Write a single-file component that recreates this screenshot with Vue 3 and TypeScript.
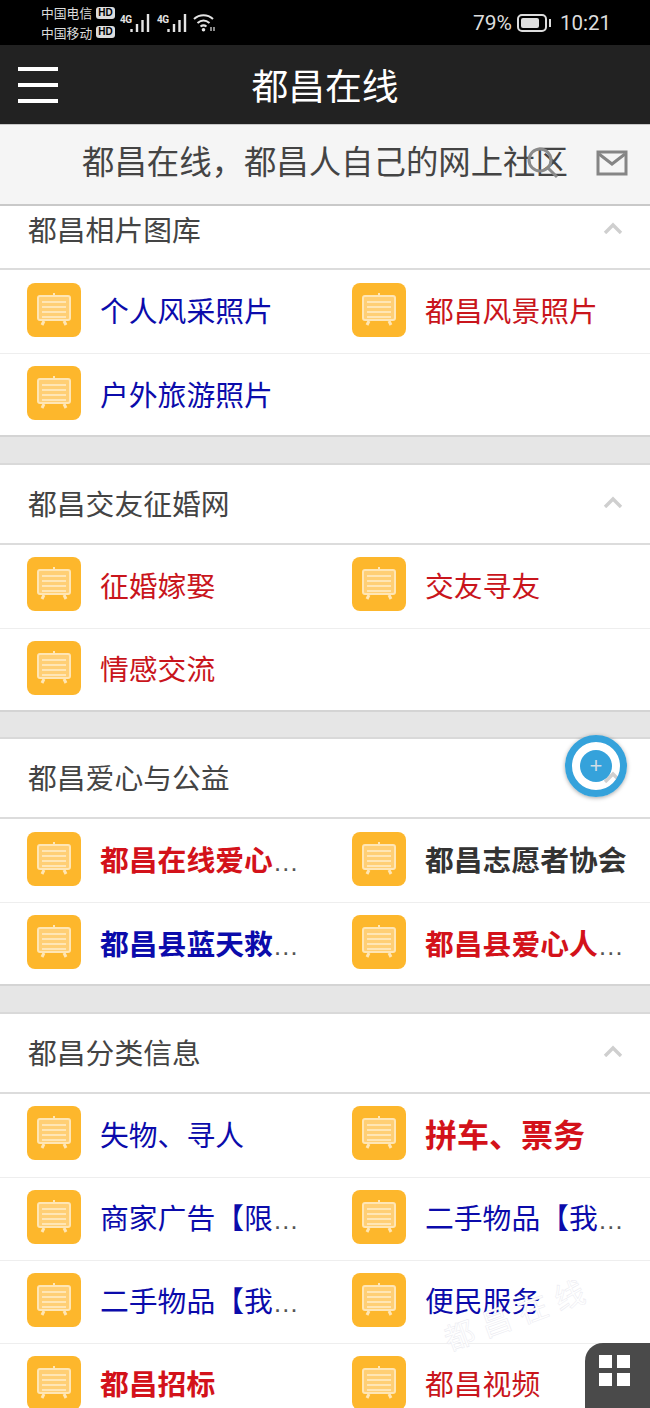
<script setup lang="ts">
type Item = { name: string; color: 'blue' | 'red' | 'dark'; bold?: boolean; big?: boolean; cut?: boolean }
type Section = { title: string; items: Item[] }

const sections: Section[] = [
  {
    title: '都昌相片图库',
    items: [
      { name: '个人风采照片', color: 'blue' },
      { name: '都昌风景照片', color: 'red' },
      { name: '户外旅游照片', color: 'blue' },
    ],
  },
  {
    title: '都昌交友征婚网',
    items: [
      { name: '征婚嫁娶', color: 'red' },
      { name: '交友寻友', color: 'red' },
      { name: '情感交流', color: 'red' },
    ],
  },
  {
    title: '都昌爱心与公益',
    items: [
      { name: '都昌在线爱心', color: 'red', bold: true, cut: true },
      { name: '都昌志愿者协会', color: 'dark', bold: true },
      { name: '都昌县蓝天救', color: 'blue', bold: true, cut: true },
      { name: '都昌县爱心人', color: 'red', bold: true, cut: true },
    ],
  },
  {
    title: '都昌分类信息',
    items: [
      { name: '失物、寻人', color: 'blue' },
      { name: '拼车、票务', color: 'red', bold: true, big: true },
      { name: '商家广告【限', color: 'blue', cut: true },
      { name: '二手物品【我', color: 'blue', cut: true },
      { name: '二手物品【我', color: 'blue', cut: true },
      { name: '便民服务', color: 'blue' },
      { name: '都昌招标', color: 'red', bold: true },
      { name: '都昌视频', color: 'red' },
    ],
  },
]

const toRows = (items: Item[]) => {
  const rows: Item[][] = []
  for (let i = 0; i < items.length; i += 2) rows.push(items.slice(i, i + 2))
  return rows
}
</script>

<template>
  <div class="page">
    <div class="status">
      <div class="carriers">
        <div class="carrier">中国电信<span class="hd">HD</span></div>
        <div class="carrier">中国移动<span class="hd">HD</span></div>
      </div>
      <div v-for="n in 2" :key="n" class="signal">
        <span class="net">4G</span>
        <svg width="20" height="18" viewBox="0 0 20 18">
          <path d="M1.5 15v3M7 10v8M12.500 6v12M18 0v18" stroke="#e4e4e4" stroke-width="2.400" fill="none" />
        </svg>
      </div>
      <svg class="wifi" width="23" height="18" viewBox="0 0 23 18" fill="none" stroke="#e4e4e4" stroke-width="2">
        <path d="M1 5C6.500 0 14.500 0 20 5" />
        <path d="M4.500 9c3.800-3.200 8.200-3.200 12 0" />
        <path d="M7.500 12.500c2-1.500 4-1.500 6 0" />
        <circle cx="10.500" cy="15.800" r="1.800" fill="#e4e4e4" stroke="none" />
        <path d="M18 13v4M21 17v-4" stroke-width="1.200" />
      </svg>
      <div class="status-right">
        <span class="pct">79%</span>
        <span class="battery"><span class="battery-fill"></span></span>
        <span class="clock">10:21</span>
      </div>
    </div>

    <header class="topbar">
      <div class="burger"><i></i><i></i><i></i></div>
      <h1>都昌在线</h1>
    </header>

    <div class="subbar">
      <span class="slogan">都昌在线，都昌人自己的网上社区</span>
      <svg class="search" width="36" height="36" viewBox="0 0 36 36" fill="none" stroke="#8a8a8a" stroke-width="3">
        <circle cx="15" cy="14" r="11" />
        <path d="M23 22l9 9" />
      </svg>
      <svg class="mail" width="32" height="26" viewBox="0 0 32 26" fill="none" stroke="#858585" stroke-width="3">
        <rect x="2" y="2" width="28" height="22" />
        <path d="M3 4l13 10L29 4" />
      </svg>
    </div>

    <section v-for="(sec, i) in sections" :key="sec.title" class="section">
      <div class="head" :class="{ 'head-first': i === 0 }">
        <span>{{ sec.title }}</span>
        <svg width="20" height="12" viewBox="0 0 20 12" fill="none" stroke="#cfcfcf" stroke-width="3.400">
          <path d="M2 11l8-8 8 8" />
        </svg>
      </div>
      <div v-for="(row, r) in toRows(sec.items)" :key="r" class="row">
        <div v-for="(item, c) in row" :key="c" class="cell">
          <span class="icon">
            <svg width="38" height="38" viewBox="0 0 38 38" fill="none" stroke="#ffe6b5" stroke-width="2">
              <path d="M19 2v3" />
              <rect x="3" y="5" width="32" height="24" rx="2" fill="#ffcf75" />
              <path d="M7 11h24M7 16h24M7 21h24M7 26h24" />
              <path d="M9 30l-2 4M29 30l2 4" stroke-width="3" />
            </svg>
          </span>
          <span class="label" :class="[item.color, { bold: item.bold, big: item.big }]">{{ item.name }}<span v-if="item.cut" class="more">…</span></span>
        </div>
      </div>
      <div class="gap"></div>
    </section>

    <div class="watermark">都昌在线</div>

    <div class="float-btn"><span class="float-dot">+</span></div>

    <div class="grid-btn"><i></i><i></i><i></i><i></i></div>
  </div>
</template>

<style>
html,
body {
  margin: 0;
  background: #fff;
}
</style>

<style scoped>
.page {
  position: relative;
  width: 650px;
  height: 1408px;
  overflow: hidden;
  background: #fff;
  font-family: "Noto Sans CJK SC", "Noto Sans", sans-serif;
}

.status {
  height: 45px;
  background: #000;
  color: #ddd;
  display: flex;
  align-items: center;
  padding: 0 39px 0 41px;
  box-sizing: border-box;
}
.carriers {
  width: 79px;
  font-size: 12.8px;
  line-height: 19.5px;
}
.carrier {
  display: flex;
  align-items: center;
  white-space: nowrap;
}
.hd {
  margin-left: 4px;
  padding: 0 2px;
  height: 12px;
  line-height: 12px;
  border-radius: 3px;
  background: #ddd;
  color: #000;
  font-family: "Liberation Sans", sans-serif;
  font-size: 10px;
  font-weight: 700;
}
.signal {
  position: relative;
  width: 37px;
  height: 18px;
  display: flex;
  padding-left: 10px;
  box-sizing: border-box;
}
.net {
  position: absolute;
  left: 0;
  top: 1px;
  font-family: "Roboto", sans-serif;
  font-size: 10px;
  line-height: 10px;
  font-weight: 700;
  color: #e4e4e4;
  letter-spacing: -0.5px;
}
.wifi {
  margin-left: -1px;
}
.status-right {
  margin-left: auto;
  display: flex;
  align-items: center;
  font-family: "Roboto", sans-serif;
  font-size: 20.5px;
}
.pct {
  font-size: 21px;
}
.battery {
  position: relative;
  width: 30px;
  height: 18px;
  margin: 0 13px 0 5px;
  padding: 2px;
  box-sizing: border-box;
  border: 2px solid #ddd;
  border-radius: 5px;
}
.battery::after {
  content: "";
  position: absolute;
  right: -6px;
  top: 3px;
  width: 2px;
  height: 8px;
  background: #ddd;
}
.battery-fill {
  display: block;
  width: 80%;
  height: 100%;
  border-radius: 2px;
  background: #ddd;
}

.topbar {
  position: relative;
  height: 79px;
  background: #222;
  border-bottom: 1px solid #c8c8c8;
  display: flex;
  align-items: center;
  justify-content: center;
}
.topbar h1 {
  margin: 0 0 2px;
  font-size: 36.8px;
  font-weight: 400;
  color: #fff;
}
.burger {
  position: absolute;
  left: 18px;
  top: 22px;
  width: 40px;
  display: flex;
  flex-direction: column;
  gap: 12px;
}
.burger i {
  height: 4px;
  background: #fff;
}

.subbar {
  position: relative;
  height: 69px;
  background: #f5f5f5;
  border-bottom: 2px solid #c9c9c9;
  padding: 0 0 10px 82px;
  display: flex;
  align-items: center;
}
.slogan {
  font-size: 32.4px;
  color: #444;
  white-space: nowrap;
}
.search {
  position: absolute;
  left: 525px;
  top: 21px;
}
.mail {
  position: absolute;
  left: 596px;
  top: 25px;
}

.head {
  height: 75px;
  padding: 0 27px 3px 28px;
  border-bottom: 2px solid #dcdcdc;
  display: flex;
  align-items: center;
  justify-content: space-between;
  font-size: 28.8px;
  color: #444;
}
.head-first {
  height: 44px;
  padding-bottom: 18px;
}
.row {
  display: flex;
  height: 83px;
  box-sizing: border-box;
}
.row + .row {
  border-top: 1px solid #eee;
}
.cell {
  width: 325px;
  display: flex;
  align-items: center;
  padding: 0 23px 4px 27px;
  box-sizing: border-box;
}
.icon {
  flex: none;
  width: 54px;
  height: 54px;
  border-radius: 8px;
  background: #fdb72c;
  display: flex;
  align-items: center;
  justify-content: center;
  margin-right: 19px;
}
.label {
  font-family: "Noto Sans", "Noto Sans CJK SC", sans-serif;
  font-size: 28.8px;
  white-space: nowrap;
}
.more {
  font-family: "Liberation Sans", sans-serif;
  font-size: 26px;
  font-weight: 400;
  color: #555;
}
.blue {
  color: #0b0bab;
}
.red {
  color: #c9151c;
}
.dark {
  color: #333;
}
.bold {
  font-weight: 700;
}
.bold.red {
  color: #d3121a;
}
.big {
  font-size: 32px;
}
.gap {
  height: 25.5px;
  margin-top: -1px;
  background: #e6e6e6;
  border-top: 2px solid #d4d4d4;
  border-bottom: 2px solid #d9d9d9;
}

.watermark {
  position: absolute;
  left: 440px;
  top: 1290px;
  font-size: 30px;
  line-height: 44px;
  letter-spacing: 9px;
  color: #fff;
  -webkit-text-stroke: 0.5px #eaeaf0;
  transform: rotate(-20deg);
  pointer-events: none;
}

.float-btn {
  position: absolute;
  left: 565px;
  top: 735px;
  width: 62px;
  height: 62px;
  box-sizing: border-box;
  border: 7px solid #35a2db;
  border-radius: 50%;
  box-shadow: 0 1px 4px rgba(0, 0, 0, 0.35);
  display: flex;
  align-items: center;
  justify-content: center;
}
.float-dot {
  width: 32px;
  height: 32px;
  border-radius: 50%;
  background: #35a2db;
  color: #cfdde6;
  font-family: "Liberation Sans", sans-serif;
  font-size: 22px;
  line-height: 31px;
  text-align: center;
}

.grid-btn {
  position: absolute;
  right: 0;
  bottom: 0;
  width: 65px;
  height: 65px;
  box-sizing: border-box;
  padding: 12px 19px 0 14px;
  border-top-left-radius: 18px;
  background: #4a4a4a;
  display: grid;
  grid-template-columns: 13px 13px;
  grid-auto-rows: 13px;
  gap: 5px;
}
.grid-btn i {
  background: #fff;
}
</style>
